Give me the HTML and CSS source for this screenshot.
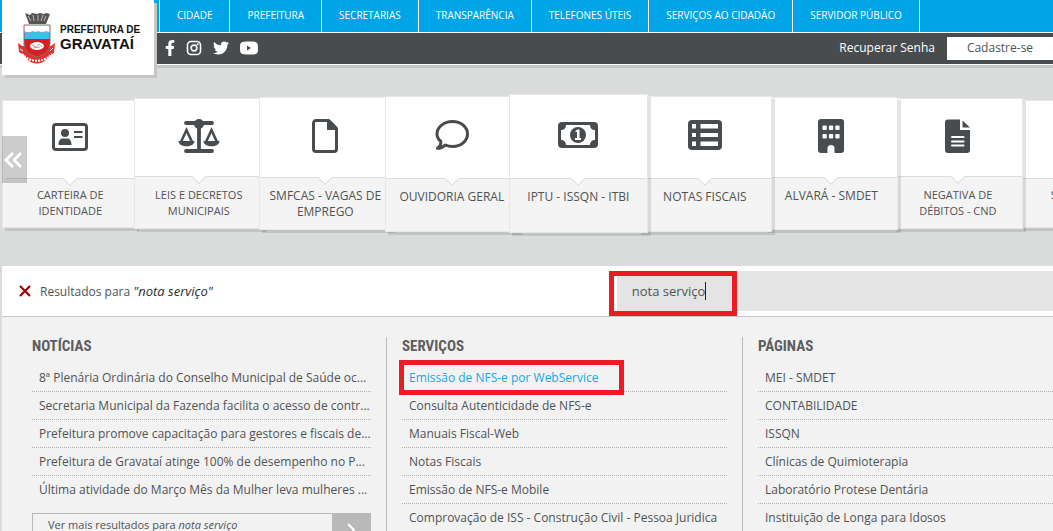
FILE: index.html
```html
<!DOCTYPE html>
<html lang="pt-BR">
<head>
<meta charset="utf-8">
<title>Prefeitura de Gravataí</title>
<link rel="stylesheet" href="styles.css">
</head>
<body>
<header class="header">
  <a class="logo" href="#">
    <svg class="crest" viewBox="0 0 38 52" aria-hidden="true">
      <path d="M7 1l5 2 2-2 5 1 3-1 4 1 2-1 4 1-4 10H11z" fill="#555"/>
      <path d="M10 4l3 5M15 3l1 6M20 3v6M25 3l-2 6M28 4l-2 5" stroke="#bbb" stroke-width="1"/>
      <path d="M0 31l4 3 29 0 4-3-1 10-5 3c-5 10-19 10-24 0l-6-4z" fill="#d33"/>
      <path d="M6 13h26v18c0 8-6 12-13 14C12 43 6 39 6 31z" fill="#d91c22" stroke="#777" stroke-width="1"/>
      <path d="M6.500 13.500h25v7h-25z" fill="#fff"/>
      <path d="M6.500 19l4 2 4-2 3 1 3-1 4 2 3-2 4 1v7h-25z" fill="#3dbfee"/>
      <ellipse cx="19" cy="34" rx="7" ry="4" fill="#fff"/>
      <path d="M14 33l4 2 3-3 3 3M15 36l7-1" stroke="#c99" fill="none"/>
      <path d="M4 42c8 9 22 9 30 0" fill="none" stroke="#fff" stroke-width="2" stroke-dasharray="2 1"/>
      <path d="M2 37l3 2M35 36l-3 3" stroke="#fff"/>
    </svg>
    <span class="logo-text"><span class="logo-small">PREFEITURA DE</span><span class="logo-big">GRAVATAÍ</span></span>
  </a>
  <nav class="nav">
    <a href="#">CIDADE</a><a href="#">PREFEITURA</a><a href="#">SECRETARIAS</a><a href="#">TRANSPARÊNCIA</a><a href="#">TELEFONES ÚTEIS</a><a href="#">SERVIÇOS AO CIDADÃO</a><a href="#">SERVIDOR PÚBLICO</a>
  </nav>
  <div class="bar">
    <div class="social">
      <a href="#" aria-label="Facebook"><svg width="10" height="16" viewBox="0 0 320 512"><path d="M279.140 288l14.220-92.660h-88.910v-60.130c0-25.350 12.420-50.060 52.240-50.060h40.420V6.260S260.430 0 225.360 0c-73.220 0-121.080 44.380-121.080 124.720v70.620H22.890V288h81.390v224h100.170V288z"/></svg></a>
      <a href="#" aria-label="Instagram"><svg width="16" height="16" viewBox="0 0 16 16"><rect x="1.500" y="1.500" width="13" height="13" rx="3.500" fill="none" stroke="#fff" stroke-width="1.600"/><circle cx="8" cy="8" r="2.900" fill="none" stroke="#fff" stroke-width="1.600"/><circle cx="11.700" cy="4.300" r="1"/></svg></a>
      <a href="#" aria-label="Twitter"><svg width="16" height="16" viewBox="0 0 512 512"><path d="M459.370 151.716c.325 4.548.325 9.097.325 13.645 0 138.720-105.583 298.558-298.558 298.558-59.452 0-114.680-17.219-161.137-47.106 8.447.974 16.568 1.299 25.340 1.299 49.055 0 94.213-16.568 130.274-44.832-46.132-.975-84.792-31.188-98.112-72.772 6.498.974 12.995 1.624 19.818 1.624 9.421 0 18.843-1.300 27.614-3.573-48.081-9.747-84.143-51.980-84.143-102.985v-1.299c13.969 7.797 30.214 12.670 47.431 13.319-28.264-18.843-46.781-51.005-46.781-87.391 0-19.492 5.197-37.360 14.294-52.954 51.655 63.675 129.300 105.258 216.365 109.807-1.624-7.797-2.599-15.918-2.599-24.040 0-57.828 46.782-104.934 104.934-104.934 30.213 0 57.502 12.670 76.670 33.137 23.715-4.548 46.456-13.320 66.599-25.340-7.798 24.366-24.366 44.833-46.132 57.827 21.117-2.273 41.584-8.122 60.426-16.243-14.292 20.791-32.161 39.308-52.628 54.253z"/></svg></a>
      <a href="#" aria-label="YouTube"><svg width="18" height="14" viewBox="0 0 18 14"><path fill-rule="evenodd" d="M9 0.500c8 0 9 .2 9 6.500s-1 6.500-9 6.500S0 13.300 0 7 1 .5 9 .5zM7 4.500v5l4-2.500z"/></svg></a>
    </div>
    <div class="account"><a class="recover" href="#">Recuperar Senha</a><button class="signup" type="button">Cadastre-se</button></div>
  </div>
</header>

<main class="page">
  <section class="carousel">
    <button class="prev" type="button" aria-label="Anterior"><svg width="19" height="16" viewBox="0 0 19 16"><path d="M9 1L2 8l7 7M17 1l-7 7 7 7" fill="none" stroke="#fff" stroke-width="2.800"/></svg></button>
    <a class="card c4 first" href="#"><span class="icon"><svg width="36" height="28" viewBox="0 0 36 28"><rect x="1.500" y="1.500" width="33" height="25" rx="2.500" fill="none" stroke="#484c4f" stroke-width="3"/><circle cx="13" cy="10" r="4"/><path d="M6.500 22c0-5 2-6.500 4.500-6.500h4c2.500 0 4.500 1.500 4.500 6.500zM22 8h8.500v2H22zM22 13h8.500v2H22z"/></svg></span><span class="label">CARTEIRA DE<br>IDENTIDADE</span></a>
    <a class="card c3" href="#"><span class="icon"><svg width="42" height="34" viewBox="0 0 42 34"><g stroke="#484c4f" stroke-width="3.800" stroke-linecap="round" fill="none"><path d="M8 4h26M8 32h26M21 4v28"/><path d="M3 23L8.500 11 14 23M28 23l5.500-12L39 23" stroke-width="2.600"/></g><circle cx="21" cy="5" r="5"/><path d="M.5 22h16c0 7-16 7-16 0zM25.500 22h16c0 7-16 7-16 0z"/></svg></span><span class="label">LEIS E DECRETOS<br>MUNICIPAIS</span></a>
    <a class="card c2" href="#"><span class="icon"><svg width="26" height="34" viewBox="0 0 26 34"><path d="M4 1.500h12.500l8 8V30a2.500 2.500 0 0 1-2.500 2.500H4A2.500 2.500 0 0 1 1.500 30V4A2.500 2.500 0 0 1 4 1.500z" fill="none" stroke="#484c4f" stroke-width="3"/><path d="M15 1h3l7 7v3H15z"/></svg></span><span class="label">SMFCAS - VAGAS DE<br>EMPREGO</span></a>
    <a class="card c1" href="#"><span class="icon"><svg width="34" height="30" viewBox="0 0 34 30"><path d="M17.500 1.500C26 1.500 32.500 7 32.500 14S26 26.500 17.500 26.500c-2.500 0-5-.5-7-1.500-2.500 2.200-5 3.300-8 3.300 2.600-2 3.800-4.300 3.300-7C3.500 19.500 2 17 2 14 2 7 9 1.500 17.500 1.500z" fill="none" stroke="#484c4f" stroke-width="3" stroke-linejoin="round"/></svg></span><span class="label">OUVIDORIA GERAL</span></a>
    <a class="card c0" href="#"><span class="icon"><svg width="40" height="26" viewBox="0 0 40 26"><rect width="40" height="26" rx="4"/><path d="M8 3h24c0 3 2 5 5 5v10c-3 0-5 2-5 5H8c0-3-2-5-5-5V8c3 0 5-2 5-5z" fill="#fff"/><circle cx="20" cy="13" r="8"/><path d="M17.500 9l2-1.500h2V16H23v2h-6v-2h2v-6h-1.500z" fill="#fff"/></svg></span><span class="label">IPTU - ISSQN - ITBI</span></a>
    <a class="card c1" href="#"><span class="icon"><svg width="34" height="30" viewBox="0 0 34 30"><rect width="34" height="30" rx="4"/><path d="M4 4h4v4.500H4zM12.500 4H30v4.500H12.500zM4 13h4v4H4zM12.500 13H30v4H12.500zM4 21.500h4V26H4zM12.500 21.500H30V26H12.500z" fill="#fff"/></svg></span><span class="label">NOTAS FISCAIS</span></a>
    <a class="card c2" href="#"><span class="icon"><svg width="26" height="34" viewBox="0 0 26 34"><rect width="26" height="34" rx="3"/><g fill="#fff"><rect x="4.500" y="6.500" width="4.300" height="4.500" rx="1"/><rect x="10.900" y="6.500" width="4.300" height="4.500" rx="1"/><rect x="17.300" y="6.500" width="4.300" height="4.500" rx="1"/><rect x="4.500" y="15" width="4.300" height="4.500" rx="1"/><rect x="10.900" y="15" width="4.300" height="4.500" rx="1"/><rect x="17.300" y="15" width="4.300" height="4.500" rx="1"/><path d="M9.500 34v-4.500a3.500 3.500 0 0 1 7 0V34z"/></g></svg></span><span class="label">ALVARÁ - SMDET</span></a>
    <a class="card c3" href="#"><span class="icon"><svg width="26" height="34" viewBox="0 0 26 34"><path d="M3 .5h12V11h10v20a3 3 0 0 1-3 3H3a3 3 0 0 1-3-3V3.500a3 3 0 0 1 3-3zM17.500 1.500l7.500 7h-7.500z"/><path d="M7 18h11.500M7 22.500h11.500M7 26.500h11.500" stroke="#fff" stroke-width="2" stroke-linecap="round"/></svg></span><span class="label">NEGATIVA DE<br>DÉBITOS - CND</span></a>
    <a class="card c4" href="#"><span class="icon"></span><span class="label">SERVIÇOS DE</span></a>
  </section>

  <section class="results">
    <div class="search">
      <button class="close" type="button" aria-label="Fechar"><svg width="12" height="12" viewBox="0 0 12 12"><path d="M1 1l10 10M11 1L1 11" stroke="#a00000" stroke-width="2.200"/></svg></button>
      <p class="summary">Resultados para <em>"nota serviço"</em></p>
      <div class="field"><input type="text" value="nota serviço" aria-label="Pesquisar"><span class="caret"></span><span class="mark mark-field"></span></div>
    </div>
    <div class="columns">
      <section class="column">
        <h2>NOTÍCIAS</h2>
        <ul>
          <li><a href="#">8ª Plenária Ordinária do Conselho Municipal de Saúde oc...</a></li>
          <li><a href="#">Secretaria Municipal da Fazenda facilita o acesso de contr...</a></li>
          <li><a href="#">Prefeitura promove capacitação para gestores e fiscais de...</a></li>
          <li><a href="#">Prefeitura de Gravataí atinge 100% de desempenho no P...</a></li>
          <li><a href="#">Última atividade do Março Mês da Mulher leva mulheres ...</a></li>
        </ul>
        <a class="more" href="#"><span>Ver mais resultados para <em>nota serviço</em></span><i class="more-arrow"><svg width="8" height="14" viewBox="0 0 8 14"><path d="M1 1l6 6-6 6" fill="none" stroke="#fff" stroke-width="2"/></svg></i></a>
      </section>
      <section class="column">
        <h2>SERVIÇOS</h2>
        <ul>
          <li><a class="active" href="#">Emissão de NFS-e por WebService</a><span class="mark mark-item"></span></li>
          <li><a href="#">Consulta Autenticidade de NFS-e</a></li>
          <li><a href="#">Manuais Fiscal-Web</a></li>
          <li><a href="#">Notas Fiscais</a></li>
          <li><a href="#">Emissão de NFS-e Mobile</a></li>
          <li><a href="#">Comprovação de ISS - Construção Civil - Pessoa Juridica</a></li>
        </ul>
      </section>
      <section class="column">
        <h2>PÁGINAS</h2>
        <ul>
          <li><a href="#">MEI - SMDET</a></li>
          <li><a href="#">CONTABILIDADE</a></li>
          <li><a href="#">ISSQN</a></li>
          <li><a href="#">Clínicas de Quimioterapia</a></li>
          <li><a href="#">Laboratório Protese Dentária</a></li>
          <li><a href="#">Instituição de Longa para Idosos</a></li>
        </ul>
      </section>
    </div>
  </section>
</main>
</body>
</html>
```
FILE: styles.css
```css
* { box-sizing: border-box; }

body {
  display: flex;
  flex-direction: column;
  height: 100vh;
  margin: 0;
  overflow: hidden;
  background: #dadcdb;
  color: #505355;
  font: 12px/16px "Open Sans", "Noto Sans", sans-serif;
}

a { color: inherit; text-decoration: none; }
button { border: 0; padding: 0; font: inherit; color: inherit; }
svg { display: block; flex: none; }

/* Header */
.header {
  position: relative;
  flex: none;
  border-bottom: 1px solid #fff;
  box-shadow: 0 3px 0 #c5c7c6;
}

.logo {
  position: absolute;
  z-index: 10;
  top: 0;
  left: 2px;
  display: flex;
  align-items: center;
  width: 152px;
  height: 75px;
  padding-left: 16px;
  gap: 4px;
  background: #fff;
  box-shadow: 3px 3px 0 #c5c7c6;
  color: #111;
  font-family: "Liberation Sans", Arial, sans-serif;
  font-weight: bold;
}

.crest { width: 38px; height: 52px; }
.logo-text { display: flex; flex-direction: column; }
.logo-small { font-size: 10px; line-height: 12px; }
.logo-big { font-size: 15px; line-height: 16px; }

.nav {
  display: flex;
  height: 33px;
  padding-left: 159px;
  border-bottom: 1px solid #fff;
  background: #00a5e8;
}

.nav a {
  padding: 0 17px;
  border-left: 1px solid #fff;
  color: #fff;
  font-size: 10px;
  line-height: 30px;
  white-space: nowrap;
}

.nav a:last-child { border-right: 1px solid #fff; }

.bar {
  display: flex;
  justify-content: space-between;
  align-items: center;
  height: 31px;
  padding: 0 0 1px 165px;
  background: #484c4f;
}

.social { display: flex; align-items: center; gap: 11px; fill: #fff; }
.account { display: flex; align-items: center; gap: 12px; }
.recover { color: #fff; font-weight: 500; }
.signup { width: 106px; height: 23px; background: #fff; }

/* Card carousel */
.page { flex: 1; padding-left: 2px; }

.carousel {
  position: relative;
  display: flex;
  align-items: center;
  height: 201px;
  padding: 0 0 4px 5px;
  overflow: hidden;
}

.prev {
  position: absolute;
  z-index: 8;
  top: 71px;
  left: 0;
  display: flex;
  align-items: center;
  width: 25px;
  height: 47px;
  padding-left: 2px;
  background: rgba(0, 0, 0, .2);
}

.card {
  position: relative;
  display: flex;
  flex: 0 0 calc(12% + 1px);
  flex-direction: column;
  border: 1px solid #e8e8e8;
  background: #f4f4f4;
  box-shadow: 3px 3px 0 rgba(0, 0, 0, .11);
  font-size: 11px;
  text-align: center;
}

.icon {
  position: relative;
  display: flex;
  align-items: center;
  justify-content: center;
  height: 78px;
  padding-bottom: 4px;
  border-bottom: 1px solid #dcdcdc;
  background: #fff;
  fill: #484c4f;
}

.icon::after {
  content: "";
  position: absolute;
  bottom: -6px;
  left: calc(50% - 5px);
  width: 9px;
  height: 9px;
  border: solid #dcdcdc;
  border-width: 0 1px 1px 0;
  background: #fff;
  transform: rotate(45deg);
}

.label { padding-top: 10px; white-space: nowrap; }

.c4 { z-index: 1; height: 128px; }
.c3 { z-index: 2; height: 131px; flex-basis: calc(12% + 5px); margin: 0 -2px; }
.c2 { z-index: 3; height: 133px; flex-basis: calc(12% + 7px); margin: 0 -3px; font-size: 12px; }
.c1 { z-index: 4; height: 136px; flex-basis: calc(12% + 9px); margin: 0 -4px; font-size: 12px; }
.c0 { z-index: 5; height: 139px; flex-basis: calc(12% + 13px); margin: 0 -6px; font-size: 12px; }
.c4 .label { padding-top: 8px; }
.c2 .icon { height: 80px; }
.c1 .icon { height: 82px; }
.c0 .icon { height: 84px; }
.first { flex-basis: calc(12% + 8px); margin-left: -5px; padding-left: 3px; background: linear-gradient(#fff 78px, #f4f4f4 78px); }

/* Search results */
.results { background: #f2f2f2; min-height: 100%; }

.search {
  display: flex;
  align-items: center;
  height: 51px;
  padding-left: 17px;
  border-bottom: 1px solid #c4c4c4;
  background: #fff;
}

.close { background: none; }
.summary { flex: 1; margin: 0; padding-left: 9px; }
.summary em { color: #2b2d2e; font-size: 13px; }
.field { position: relative; width: calc(42% + 2px); }

.field input {
  display: block;
  width: 100%;
  height: 40px;
  padding: 0 15px;
  border: 0;
  border-radius: 0;
  outline: 0;
  background: #e4e4e4;
  color: #505355;
  font: 13px/18px "Open Sans", "Noto Sans", sans-serif;
}

.caret {
  position: absolute;
  top: 11px;
  left: 88px;
  width: 1px;
  height: 18px;
  background: #222;
}

.mark { position: absolute; border: 5px solid #ed1c24; pointer-events: none; }
.mark-field { top: 0; left: -8px; width: 128px; height: 45px; }
.mark-item { top: -4px; left: -3px; width: 225px; height: 35px; }

.columns {
  display: grid;
  grid-template-columns: 385fr 356fr 310fr;
  padding-top: 20px;
}

.column {
  min-width: 0;
  min-height: 240px;
  padding: 0 15px;
  border-right: 1px solid #b9b9b9;
}

.column:first-child { padding-left: 30px; }
.column:last-child { padding-right: 0; border-right: 0; }

h2 {
  margin: 0 0 9px;
  color: #5c5e5f;
  font: bold 15px/18px "Roboto Condensed", "Liberation Sans Narrow", Roboto, sans-serif;
}

ul { margin: 0; padding: 0; list-style: none; }

li {
  position: relative;
  height: 28px;
  padding: 0 0 0 7px;
  border-bottom: 1px dotted #b0b0b0;
  line-height: 27px;
  white-space: nowrap;
}

li:last-child { border-bottom: 0; }
.active { color: #1ba6e1; }

.more {
  display: flex;
  justify-content: space-between;
  height: 34px;
  margin-top: 9px;
  padding-left: 15px;
  border: 1px solid #b9b9b9;
  font-size: 11px;
  line-height: 22px;
}

.more-arrow {
  display: flex;
  align-items: center;
  justify-content: center;
  width: 38px;
  background: #b9b9b9;
}
```
